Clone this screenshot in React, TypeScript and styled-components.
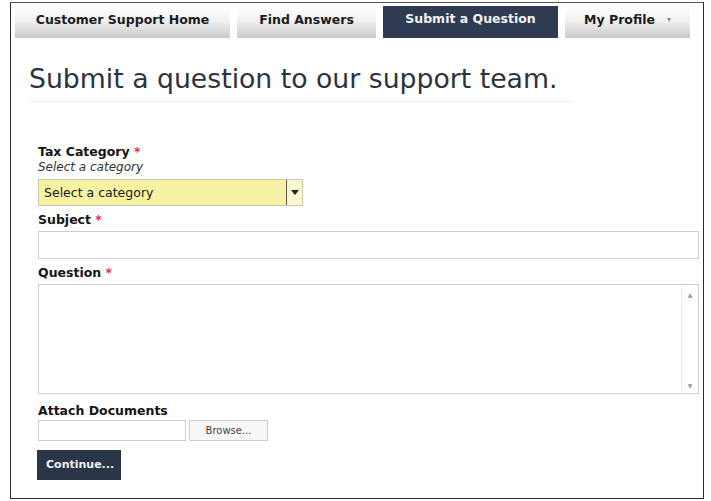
import React from 'react'
import { styled, createGlobalStyle, css } from 'styled-components'

const GlobalStyle = createGlobalStyle`
  html, body {
    margin: 0;
    padding: 0;
    background: #ffffff;
  }
  body {
    font-family: "DejaVu Sans", Verdana, sans-serif;
    color: #1e1e1e;
  }
`

const tabs = [
  { label: 'Customer Support Home', width: 215 },
  { label: 'Find Answers', width: 139 },
  { label: 'Submit a Question', width: 175, active: true },
  { label: 'My Profile', width: 125, menu: true },
]

const App = () => {
  return (
    <>
      <GlobalStyle />
      <Frame>
        <TabBar>
          {tabs.map(t => (
            <Tab key={t.label} $active={t.active} $w={t.width}>
              {t.label}
              {t.menu && <Caret>▾</Caret>}
            </Tab>
          ))}
        </TabBar>

        <Title>Submit a question to our support team.</Title>

        <Form>
          <Field>
            <Label>
              Tax Category <Req>*</Req>
            </Label>
            <Hint>Select a category</Hint>
            <SelectBox>
              <SelectText>Select a category</SelectText>
              <SelectArrow>
                <svg width="8" height="5" viewBox="0 0 8 5">
                  <path d="M0 0 L8 0 L4 5 Z" fill="#222" />
                </svg>
              </SelectArrow>
            </SelectBox>
          </Field>

          <Field>
            <Label>
              Subject <Req>*</Req>
            </Label>
            <TextInput />
          </Field>

          <Field $mb={10}>
            <Label>
              Question <Req>*</Req>
            </Label>
            <AreaWrap>
              <TextArea />
              <ScrollTrack>
                <ScrollArrow>▲</ScrollArrow>
                <ScrollArrow>▼</ScrollArrow>
              </ScrollTrack>
            </AreaWrap>
          </Field>

          <Field $mb={9}>
            <Label $mb={2}>Attach Documents</Label>
            <FileRow>
              <FileBox />
              <BrowseButton>Browse...</BrowseButton>
            </FileRow>
          </Field>

          <ContinueButton>Continue...</ContinueButton>
        </Form>
      </Frame>
    </>
  )
}

export default App

const Frame = styled.div`
  margin: 2px 7px 0 10px;
  height: 497px;
  box-sizing: border-box;
  border: 1px solid #2a2a2a;
  border-top-color: #555;
  padding: 3px 0 0 4px;
`

const TabBar = styled.div`
  display: flex;
  gap: 7px;
  height: 32px;
`

const Tab = styled.div<{ $active?: boolean; $w: number }>`
  width: ${p => p.$w}px;
  height: 100%;
  box-sizing: border-box;
  padding-top: 6px;
  text-align: center;
  font-size: 12.5px;
  font-weight: bold;
  color: #1c1c1c;
  background: linear-gradient(#ffffff 0%, #f1f1f1 45%, #c9c9c9 100%);
  ${p =>
    p.$active &&
    css`
      background: #2f3b50;
      color: #f2f2f2;
      padding-top: 5px;
    `}
`

const Caret = styled.span`
  font-size: 8px;
  color: #888;
  margin-left: 12px;
  vertical-align: 2px;
`

const Title = styled.h1`
  margin: 25px 130px 0 14px;
  padding-bottom: 7px;
  font-size: 26.7px;
  font-weight: normal;
  color: #2c3340;
  border-bottom: 1px solid #f0f0f0;
`

const Form = styled.div`
  padding: 43px 0 0 23px;
  display: flex;
  flex-direction: column;
`

const Field = styled.div<{ $mb?: number }>`
  display: flex;
  flex-direction: column;
  margin-bottom: ${p => p.$mb ?? 7}px;
`

const Label = styled.div<{ $mb?: number }>`
  font-size: 12.5px;
  font-weight: bold;
  line-height: 14px;
  margin-bottom: ${p => p.$mb ?? 4}px;
  color: #141414;
`

const Req = styled.span`
  color: #e0304a;
`

const Hint = styled.div`
  font-size: 12px;
  font-style: italic;
  color: #333;
  line-height: 14px;
  margin: -3px 0 5px;
`

const SelectBox = styled.div`
  width: 265px;
  height: 27px;
  box-sizing: border-box;
  display: flex;
  border: 1px solid #c9c9b0;
  background: #f7f3a3;
`

const SelectText = styled.div`
  flex: 1;
  font-size: 12.5px;
  line-height: 25px;
  padding-left: 5px;
  color: #1a1a1a;
`

const SelectArrow = styled.div`
  width: 15px;
  border-left: 1px solid #555;
  background: #fbf8d0;
  display: flex;
  align-items: center;
  justify-content: center;
`

const fieldBorder = css`
  box-sizing: border-box;
  border: 1px solid #cfcfcf;
  background: #fff;
`

const TextInput = styled.div`
  ${fieldBorder};
  width: 661px;
  height: 28px;
`

const AreaWrap = styled.div`
  ${fieldBorder};
  width: 661px;
  height: 110px;
  display: flex;
`

const TextArea = styled.div`
  flex: 1;
`

const ScrollTrack = styled.div`
  width: 16px;
  border-left: 1px solid #eee;
  display: flex;
  flex-direction: column;
  justify-content: space-between;
  align-items: center;
  padding: 6px 0 4px;
`

const ScrollArrow = styled.span`
  font-size: 6px;
  color: #999;
`

const FileRow = styled.div`
  display: flex;
  gap: 3px;
`

const FileBox = styled.div`
  ${fieldBorder};
  width: 148px;
  height: 21px;
`

const BrowseButton = styled.div`
  ${fieldBorder};
  width: 79px;
  height: 21px;
  font-size: 10px;
  line-height: 19px;
  text-align: center;
  color: #444;
  background: #f7f7f7;
`

const ContinueButton = styled.div`
  align-self: flex-start;
  margin-left: -1px;
  width: 84px;
  height: 30px;
  box-sizing: border-box;
  background: #2a3548;
  color: #f0f0f0;
  font-size: 11px;
  font-weight: bold;
  line-height: 30px;
  padding-left: 9px;
`
